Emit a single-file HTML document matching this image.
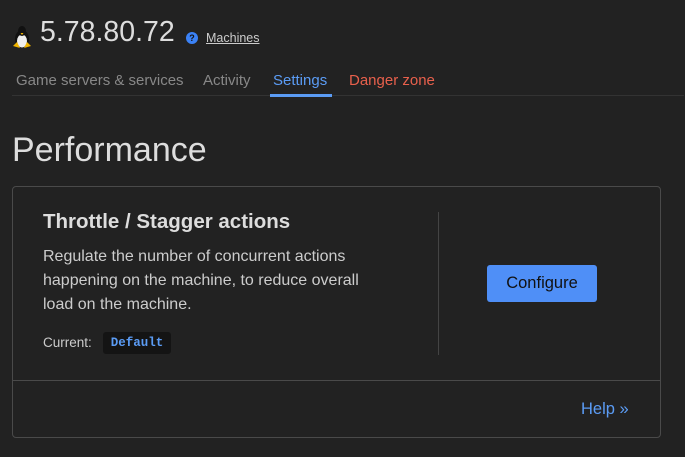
<!DOCTYPE html>
<html><head><meta charset="utf-8"><style>
html,body{margin:0;padding:0;background:#222;width:685px;height:457px;overflow:hidden;font-family:"Liberation Sans",sans-serif;color:#ddd}
.abs{position:absolute;white-space:nowrap}
</style></head><body>
<svg class="abs" style="left:12px;top:25px" width="20" height="24" viewBox="0 0 20 24">
<ellipse cx="10" cy="14" rx="7" ry="9" fill="#111"/>
<ellipse cx="10" cy="16" rx="5" ry="6.5" fill="#eee"/>
<ellipse cx="10" cy="6" rx="4" ry="5" fill="#111"/>
<path d="M1 21 L5 17 L8 23 Z" fill="#f0b400"/><path d="M19 21 L15 17 L12 23 Z" fill="#f0b400"/>
<path d="M8.5 8 L11.5 8 L10 10 Z" fill="#f0b400"/>
</svg>
<div class="abs" style="left:40px;top:16px;font-size:28.5px;color:#ddd">5.78.80.72</div>
<div class="abs" style="left:186px;top:32px;width:12px;height:12px;border-radius:50%;background:#3b82f6;color:#111;font-size:9px;font-weight:bold;text-align:center;line-height:12px">?</div>
<div class="abs" style="left:206px;top:31px;font-size:12.5px;color:#ccc;text-decoration:underline">Machines</div>
<div class="abs" style="left:16px;top:72px;font-size:15px;color:#888">Game servers &amp; services</div>
<div class="abs" style="left:203px;top:72px;font-size:15px;color:#888">Activity</div>
<div class="abs" style="left:273px;top:72px;font-size:15px;color:#5b9cf5">Settings</div>
<div class="abs" style="left:349px;top:72px;font-size:15px;color:#e8604c">Danger zone</div>
<div class="abs" style="left:12px;top:95px;width:672px;height:1px;background:#333"></div>
<div class="abs" style="left:270px;top:94px;width:62px;height:3px;background:#5b9cf5"></div>
<div class="abs" style="left:12px;top:131px;font-size:34px;color:#ddd">Performance</div>
<div class="abs" style="left:12px;top:186px;width:647px;height:250px;border:1px solid #4a4a4a;border-radius:4px"></div>
<div class="abs" style="left:13px;top:380px;width:647px;height:1px;background:#4a4a4a"></div>
<div class="abs" style="left:438px;top:212px;width:1px;height:143px;background:#444"></div>
<div class="abs" style="left:43px;top:210px;font-size:20.5px;font-weight:bold;color:#ddd">Throttle / Stagger actions</div>
<div class="abs" style="left:43px;top:245px;width:350px;white-space:normal;font-size:16px;line-height:24px;color:#ccc">Regulate the number of concurrent actions happening on the machine, to reduce overall load on the machine.</div>
<div class="abs" style="left:43px;top:335px;font-size:13.5px;color:#ccc">Current:</div>
<div class="abs" style="left:103px;top:332px;width:68px;height:22px;background:#141414;border-radius:3px;font-family:'Liberation Mono',monospace;font-size:12.5px;font-weight:bold;color:#5b9cf5;text-align:center;line-height:22px">Default</div>
<div class="abs" style="left:487px;top:265px;width:110px;height:37px;background:#4f8ff7;border-radius:3px;color:#111;font-size:16.5px;text-align:center;line-height:37px">Configure</div>
<div class="abs" style="left:581px;top:400px;font-size:16.5px;color:#5b9cf5">Help »</div>
</body></html>
